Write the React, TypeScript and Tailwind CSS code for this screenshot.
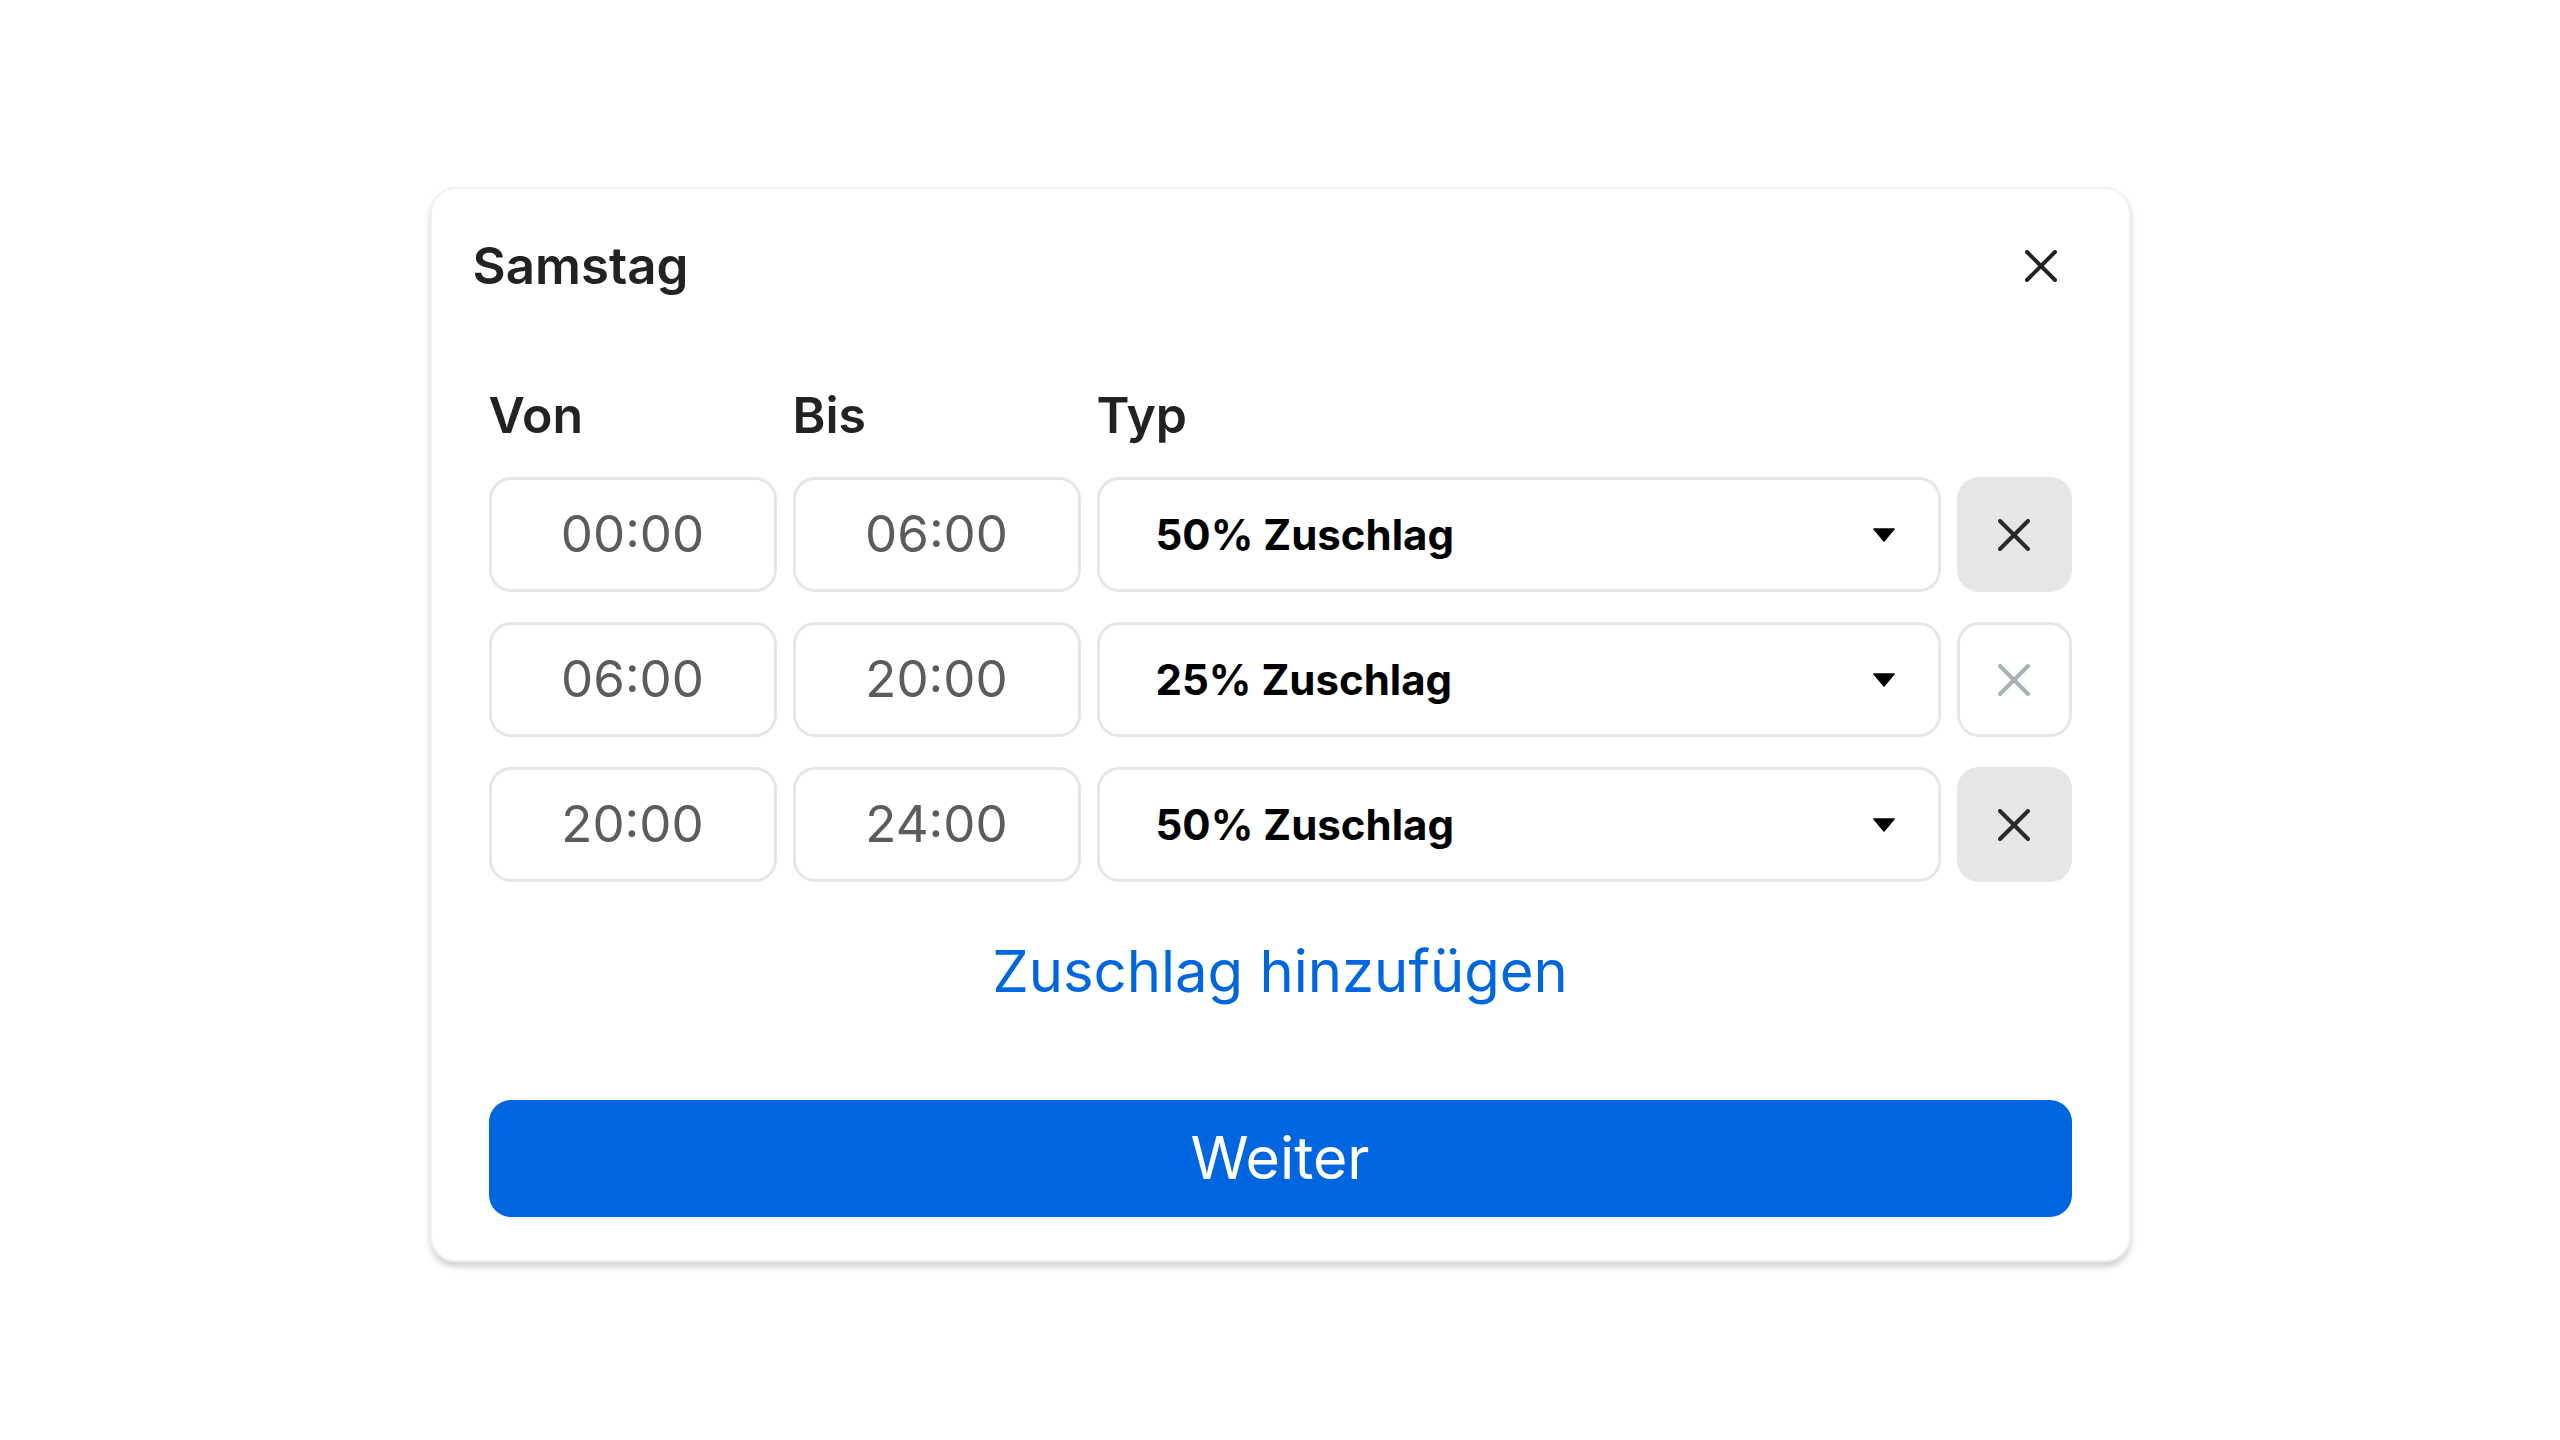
import React from "react";

const rows = [
  { from: "00:00", to: "06:00", type: "50% Zuschlag", active: true },
  { from: "06:00", to: "20:00", type: "25% Zuschlag", active: false },
  { from: "20:00", to: "24:00", type: "50% Zuschlag", active: true },
];

function XIcon({ size, stroke, color }: { size: number; stroke: number; color: string }) {
  return (
    <svg width={size} height={size} viewBox={`0 0 ${size} ${size}`} fill="none">
      <line x1={stroke / 2} y1={stroke / 2} x2={size - stroke / 2} y2={size - stroke / 2} stroke={color} strokeWidth={stroke} strokeLinecap="round" />
      <line x1={size - stroke / 2} y1={stroke / 2} x2={stroke / 2} y2={size - stroke / 2} stroke={color} strokeWidth={stroke} strokeLinecap="round" />
    </svg>
  );
}

export default function App() {
  return (
    <div className="w-full h-[1440px] pt-[9px] bg-white flex items-center justify-center font-['Inter',sans-serif]">
      <div className="w-[1701px] bg-white rounded-[26px] border-2 border-[#f0f0f0] shadow-[0_5px_6px_rgba(0,0,0,0.18)] pt-[48px] pb-[43px] px-[57px] flex flex-col">
        <div className="flex items-center justify-between -ml-[16px] pr-[15px] h-[58px]">
          <div className="text-[51px] leading-[58px] font-semibold text-[#222]">Samstag</div>
          <button className="w-[32px] h-[32px] flex items-center justify-center">
            <XIcon size={32} stroke={4} color="#222" />
          </button>
        </div>
        <div className="mt-[91px] grid grid-cols-[288px_288px_1fr_115px] gap-x-[16px]">
          <div className="text-[50px] leading-[58px] font-semibold text-[#222]">Von</div>
          <div className="text-[50px] leading-[58px] font-semibold text-[#222]">Bis</div>
          <div className="text-[50px] leading-[58px] font-semibold text-[#222]">Typ</div>
          <div />
        </div>
        <div className="mt-[33px] flex flex-col gap-[30px]">
          {rows.map((r, i) => (
            <div key={i} className="grid grid-cols-[288px_288px_1fr_115px] gap-x-[16px] h-[115px]">
              <div className="border-[3px] border-[#e6e6e6] rounded-[22px] flex items-center justify-center text-[51px] text-[#5c5c5c]">
                {r.from}
              </div>
              <div className="border-[3px] border-[#e6e6e6] rounded-[22px] flex items-center justify-center text-[51px] text-[#5c5c5c]">
                {r.to}
              </div>
              <div className="border-[3px] border-[#e6e6e6] rounded-[22px] flex items-center justify-between pl-[56px] pr-[43px]">
                <span className="text-[42px] font-bold text-black">{r.type}</span>
                <svg width="22" height="14" viewBox="0 0 22 14">
                  <path d="M1 1 H21 L11 13 Z" fill="#000" stroke="#000" strokeWidth="1.5" strokeLinejoin="round" />
                </svg>
              </div>
              {r.active ? (
                <div className="bg-[#e6e6e6] rounded-[22px] flex items-center justify-center">
                  <XIcon size={32} stroke={4} color="#2a2a2a" />
                </div>
              ) : (
                <div className="border-[3px] border-[#e6e6e6] rounded-[22px] flex items-center justify-center">
                  <XIcon size={32} stroke={4} color="#a8b0b8" />
                </div>
              )}
            </div>
          ))}
        </div>
        <div className="mt-[54px] text-center text-[58px] leading-[70px] text-[#0066dd]">Zuschlag hinzufügen</div>
        <button className="mt-[94px] h-[117px] w-full rounded-[22px] bg-[#0066e0] text-white text-[59px] flex items-center justify-center">
          Weiter
        </button>
      </div>
    </div>
  );
}
